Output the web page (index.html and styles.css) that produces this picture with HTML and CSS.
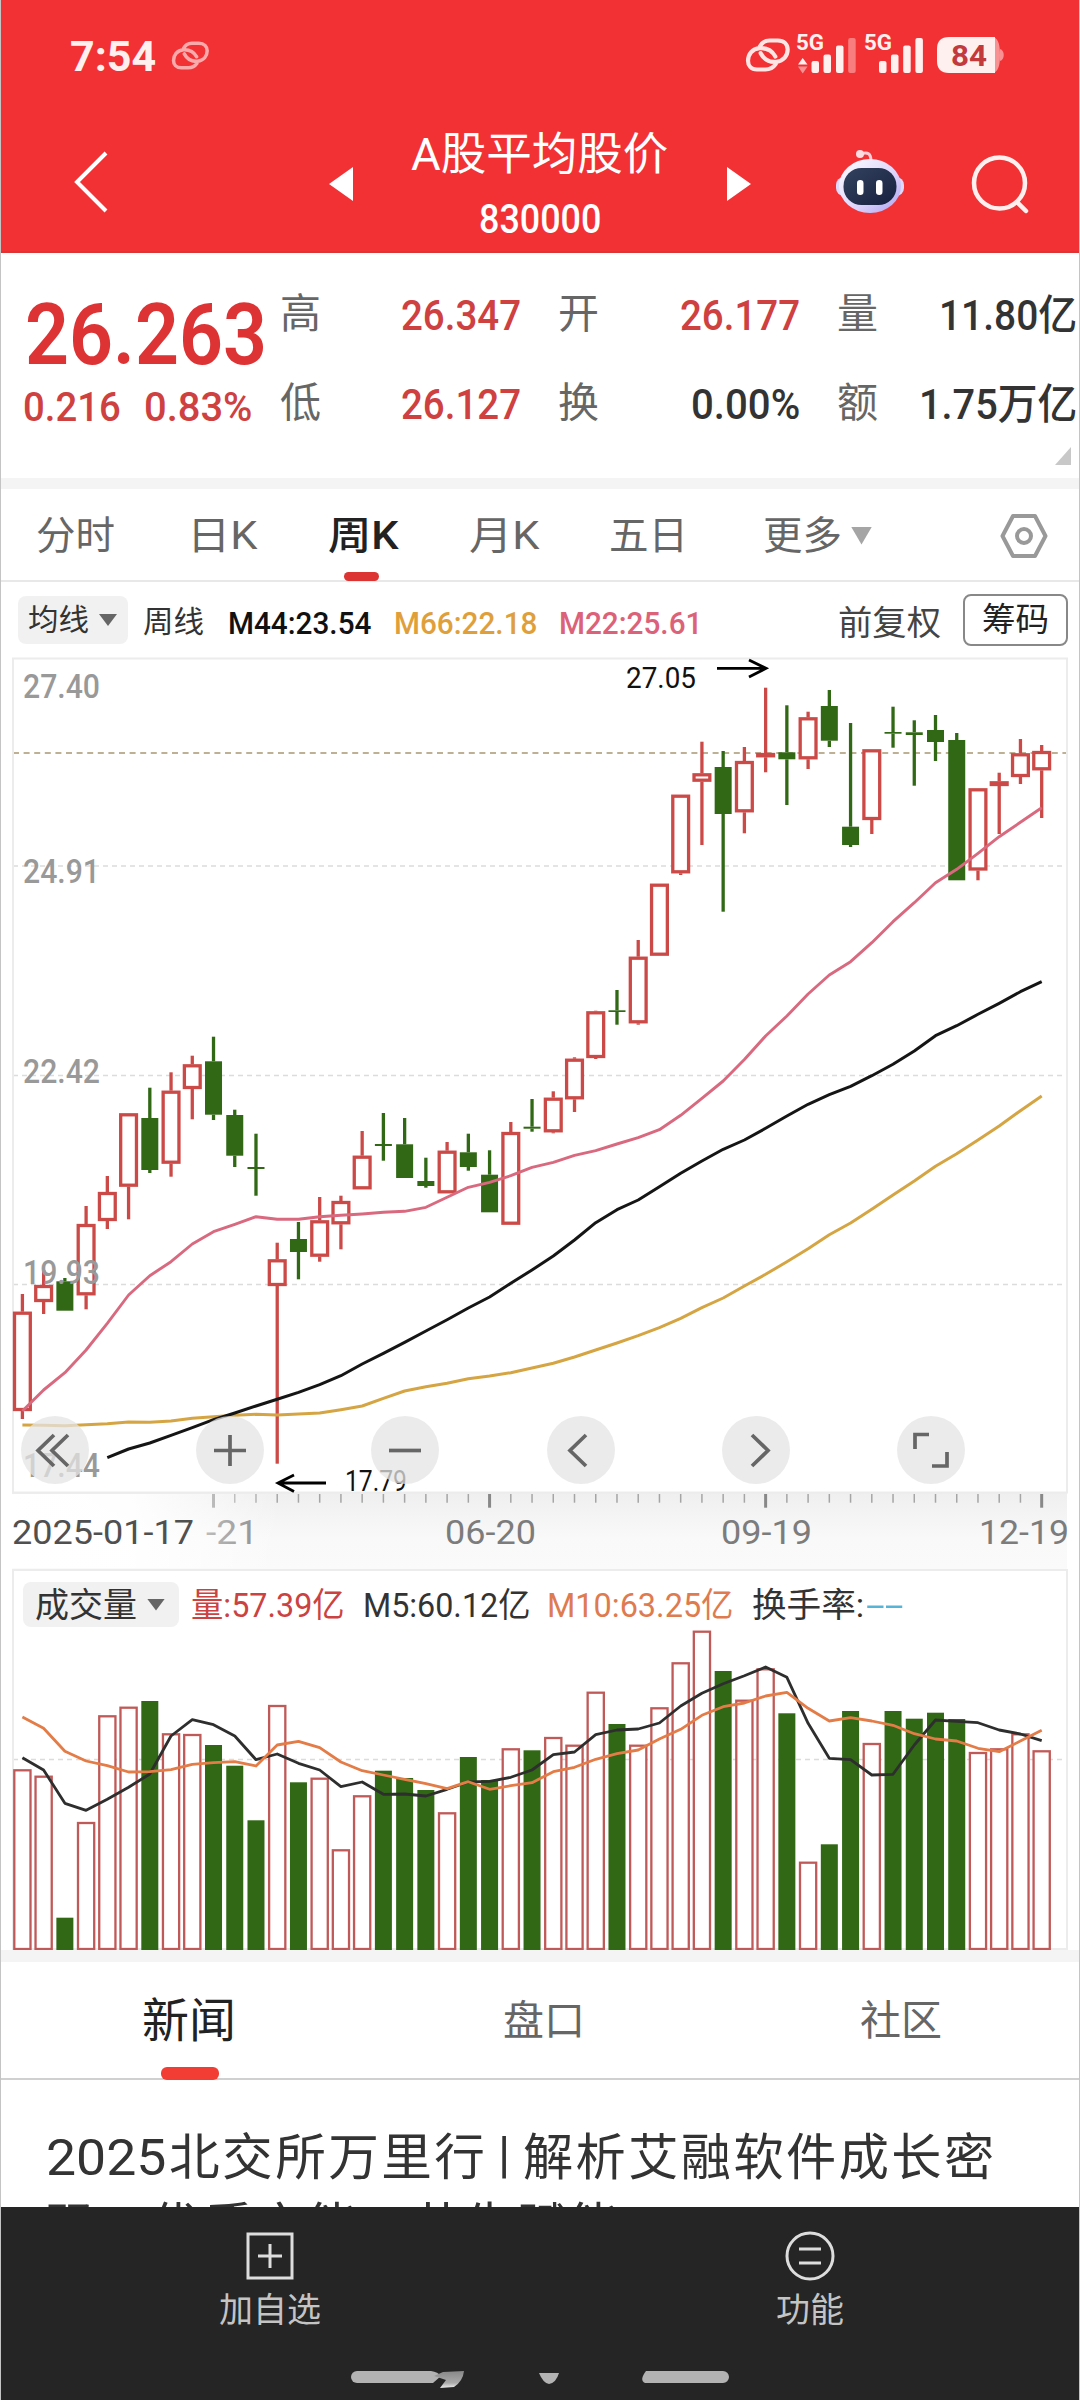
FILE: index.html
```html
<!DOCTYPE html>
<html lang="zh-CN">
<head>
<meta charset="utf-8">
<title>A股平均股价 830000</title>
<link rel="stylesheet" href="styles.css">
</head>
<body>
<div class="screen">
  <header class="top">
    <div class="status">
      <span class="fit time"><span>7:54</span></span>
      <svg class="link small" viewBox="74 53 138 107"><path d="M118 82Q128 63 148 63H172C192 63 202 75 202 90C202 108 190 124 168 127C145 129 130 118 121 101M166 134Q155 150 135 150H110C92 150 83 138 83 124C83 105 95 88 118 86C140 85 155 93 165 111"/></svg>
      <svg class="link" viewBox="74 53 138 107"><path d="M118 82Q128 63 148 63H172C192 63 202 75 202 90C202 108 190 124 168 127C145 129 130 118 121 101M166 134Q155 150 135 150H110C92 150 83 138 83 124C83 105 95 88 118 86C140 85 155 93 165 111"/></svg>
      <svg class="signals" viewBox="795 30 215 46">
        <g fill="#fff0f0">
          <text x="797" y="50" font-size="22" font-weight="700" textLength="28" lengthAdjust="spacingAndGlyphs">5G</text>
          <text x="865" y="50" font-size="22" font-weight="700" textLength="28" lengthAdjust="spacingAndGlyphs">5G</text>
          <path d="M799 64.500L803.700 58L808.500 64.500Z"/>
          <path d="M799 66.500L803.700 73.500L808.500 66.500Z" opacity=".5"/>
          <rect x="812.500" y="61" width="7.500" height="12" rx="2"/>
          <rect x="824.500" y="54.500" width="7.500" height="18.500" rx="2"/>
          <rect x="837" y="45.500" width="7.500" height="27.500" rx="2"/>
          <rect x="849.200" y="38" width="7.500" height="35" rx="2" opacity=".4"/>
          <rect x="880" y="61" width="7.500" height="12" rx="2"/>
          <rect x="892" y="54.500" width="7.500" height="18.500" rx="2"/>
          <rect x="904.200" y="45.500" width="7.500" height="27.500" rx="2"/>
          <rect x="916.400" y="38" width="7.500" height="35" rx="2"/>
          <path d="M995 37C1000 40 1001 46 1001 55C1001 64 1000 70 995 73ZM1001 49C1006 50 1006 60 1001 61Z" opacity=".5"/>
          <path d="M950 37H996V73H950Q938 73 938 61V49Q938 37 950 37Z"/>
        </g>
        <text x="952" y="66" font-size="30" font-weight="700" fill="#c33a3c" textLength="36" lengthAdjust="spacingAndGlyphs">84</text>
      </svg>
    </div>
    <div class="bar">
      <svg class="back" viewBox="0 0 40 66"><path d="M35 4L6 33L35 62"/></svg>
      <svg class="tri prev" viewBox="0 0 24 34"><path d="M0 17L24 0V34Z"/></svg>
      <div class="name">
        <span class="fit title"><span>A股平均股价</span></span>
        <span class="fit code"><span>830000</span></span>
      </div>
      <svg class="tri next" viewBox="0 0 24 34"><path d="M24 17L0 0V34Z"/></svg>
      <svg class="robot" viewBox="0 0 70 66">
        <defs>
          <linearGradient id="shell" x1="0" y1="0" x2="1" y2="1"><stop offset="0" stop-color="#fff"/><stop offset=".6" stop-color="#dcd2fb"/><stop offset="1" stop-color="#a9a2f0"/></linearGradient>
          <linearGradient id="face" x1="0" y1="0" x2="1" y2="1"><stop offset="0" stop-color="#33415f"/><stop offset="1" stop-color="#16213f"/></linearGradient>
        </defs>
        <path d="M26 6Q36 2 36 13" fill="none" stroke="#f9ccd6" stroke-width="3"/>
        <circle cx="25" cy="6" r="4" fill="#fbdce2"/>
        <rect x="1" y="29" width="68" height="19" rx="8" fill="#dcd9fb"/>
        <ellipse cx="35" cy="38" rx="31" ry="27" fill="url(#shell)"/>
        <rect x="8.500" y="20" width="53" height="37" rx="18" fill="url(#face)"/>
        <rect x="22" y="32" width="6.500" height="15" rx="3.200" fill="#fff"/>
        <rect x="41" y="32" width="6.500" height="15" rx="3.200" fill="#fff"/>
      </svg>
      <svg class="search" viewBox="0 0 62 62"><circle cx="29.500" cy="30" r="25.500"/><path d="M47 49L56 58"/></svg>
    </div>
  </header>

  <section class="quote">
    <div class="last">
      <span class="fit price"><span>26.263</span></span>
      <div class="change"><span class="fit delta"><span>0.216</span></span><span class="fit pct"><span>0.83%</span></span></div>
    </div>
    <dl class="stats">
      <dt>高</dt><dd class="fit up"><span>26.347</span></dd>
      <dt>开</dt><dd class="fit up"><span>26.177</span></dd>
      <dt>量</dt><dd class="fit volume"><span>11.80亿</span></dd>
      <dt>低</dt><dd class="fit up"><span>26.127</span></dd>
      <dt>换</dt><dd class="fit rate"><span>0.00%</span></dd>
      <dt>额</dt><dd class="fit amount"><span>1.75万亿</span></dd>
    </dl>
    <i class="corner"></i>
  </section>

  <nav class="periods">
    <a class="fit"><span>分时</span></a>
    <a class="fit k"><span>日K</span></a>
    <a class="fit k on"><span>周K</span></a>
    <a class="fit k"><span>月K</span></a>
    <a class="fit"><span>五日</span></a>
    <a class="fit"><span>更多</span></a>
    <i class="caret"></i>
    <svg class="gear" viewBox="0 0 50 48"><path d="M14 4H36L46.500 24L36 44H14L3.500 24Z"/><circle cx="25" cy="24" r="7"/></svg>
  </nav>

  <div class="averages">
    <button class="pick"><span class="fit w60"><span>均线</span></span><i class="caret"></i></button>
    <span class="fit w60 week"><span>周线</span></span>
    <span class="fit ma m44"><span>M44:23.54</span></span>
    <span class="fit ma m66"><span>M66:22.18</span></span>
    <span class="fit ma m22"><span>M22:25.61</span></span>
    <span class="fit adjust"><span>前复权</span></span>
    <button class="chips"><span class="fit"><span>筹码</span></span></button>
  </div>

  <section class="candles">
    <svg id="kline" viewBox="0 650 1080 919"></svg>
    <div class="controls">
      <button><svg viewBox="0 0 68 68"><path d="M33 19L17 34.500L33 50M47 19L31 34.500L47 50"/></svg></button>
      <button><svg viewBox="0 0 68 68"><path d="M18 34.500H50M34 19V50"/></svg></button>
      <button><svg viewBox="0 0 68 68"><path d="M18 34.500H50"/></svg></button>
      <button><svg viewBox="0 0 68 68"><path d="M39 19L23 34.500L39 50"/></svg></button>
      <button><svg viewBox="0 0 68 68"><path d="M30 19L46 34.500L30 50"/></svg></button>
      <button><svg viewBox="0 0 68 68"><path d="M18 33V18.500H32M35 50H50V36"/></svg></button>
    </div>
  </section>

  <section class="turnover">
    <div class="legend">
      <button class="pick"><span class="fit"><span>成交量</span></span><i class="caret"></i></button>
      <span class="fit vol"><span>量:57.39亿</span></span>
      <span class="fit m5"><span>M5:60.12亿</span></span>
      <span class="fit m10"><span>M10:63.25亿</span></span>
      <span class="fit hand"><span>换手率:</span></span>
      <span class="fit none"><span>--</span></span>
    </div>
    <svg id="volume" viewBox="0 1628 1080 322"></svg>
  </section>

  <nav class="feeds">
    <a class="on"><span class="fit"><span>新闻</span></span></a>
    <a><span class="fit"><span>盘口</span></span></a>
    <a><span class="fit"><span>社区</span></span></a>
  </nav>
  <article class="news">
    <h3 class="first"><span class="fit year"><span>2025</span></span><span class="fit lead"><span>北交所万里行</span></span><span class="bar-mark">|</span><span class="fit rest"><span>解析艾融软件成长密</span></span></h3>
    <span class="second">码，优质产能、共生赋能</span>
  </article>

  <footer class="dock">
    <div class="actions">
      <a><svg viewBox="0 0 52 52"><rect x="4" y="4" width="44" height="44"/><path d="M14 26H38M26 14V38"/></svg><span>加自选</span></a>
      <a><svg viewBox="0 0 52 52"><circle cx="26" cy="26" r="23"/><path d="M15 19H37M15 33H37"/></svg><span>功能</span></a>
    </div>
    <svg class="home" viewBox="340 2360 400 40">
      <defs><linearGradient id="worn" x1="0" y1="0" x2="0" y2="1"><stop offset="0" stop-color="#888"/><stop offset=".7" stop-color="#aaa"/><stop offset="1" stop-color="#eee"/></linearGradient></defs>
      <path d="M357 2371H431Q438 2372 441 2376L433 2383H357A6 6 0 0 1 357 2371Z"/>
      <path d="M646 2371H723A6 6 0 0 1 723 2383H645Q639 2380 646 2371Z"/>
      <path d="M443 2372L464 2371Q463 2381 454 2387L440 2388L446 2380L434 2376Z" fill="url(#worn)"/>
      <path d="M539 2373H559Q556 2383 549 2384Q543 2383 539 2373Z"/>
    </svg>
  </footer>
</div>
<script src="script.js"></script>
</body>
</html>
```
FILE: styles.css
```css
* { box-sizing: border-box; margin: 0; padding: 0; }
body { width: 1080px; background: #fff; font-family: Roboto, "Noto Sans CJK SC", sans-serif; color: #333; }
button { border: 0; background: none; font: inherit; color: inherit; }
svg { display: block; flex: none; }
i { display: block; flex: none; }
.screen { width: 1080px; height: 2400px; overflow: hidden; display: flex; flex-direction: column; border: solid #c4c4c4; border-width: 0 1px; }
.screen > * { flex: none; margin-left: -1px; width: 1080px; }
.fit { display: block; flex: none; white-space: nowrap; }
.fit > span { display: inline-block; transform-origin: 0 50%; }

/* header */
.top { height: 253px; background: #f23135; border-bottom: 2px solid #dc3536; color: #fff; }
.status { height: 113px; display: flex; align-items: center; }
.time { width: 86px; margin-left: 70px; font-size: 43px; font-weight: 700; line-height: 113px; color: #fff0f0; }
.link { width: 46px; height: 36px; margin: 0 3px 3px 0; fill: none; stroke: #ffe4e4; stroke-width: 12.5; stroke-linecap: round; }
.link.small { width: 39px; height: 31px; margin: 0 0 3px 15px; opacity: .68; }
.link.small + .link { margin-left: 535px; }
.signals { width: 215px; height: 46px; margin-top: -7px; }
.bar { display: flex; align-items: flex-start; height: 138px; }
.back { width: 40px; height: 66px; margin: 36px 0 0 71px; fill: none; stroke: #fff; stroke-width: 4; }
.tri { width: 24px; height: 34px; margin-top: 54px; fill: #fff; }
.prev { margin-left: 218px; }
.name { width: 255px; margin: 14px 0 0 59px; display: flex; flex-direction: column; align-items: center; }
.title { width: 257px; font-size: 45px; line-height: 56px; }
.code { width: 122px; font-size: 40px; font-weight: 500; line-height: 46px; margin-top: 14px; }
.next { margin-left: 60px; }
.robot { width: 70px; height: 66px; margin: 35px 0 0 84px; }
.search { width: 62px; height: 62px; margin: 40px 0 0 65px; fill: none; stroke: #fff0f0; stroke-width: 4.5; stroke-linecap: round; }

/* quote */
.quote { height: 236px; display: flex; border-bottom: 11px solid #f4f4f4; position: relative; }
.last { width: 280px; padding: 32px 0 0 25px; color: #de3335; flex: none; }
.price { width: 242px; font-size: 86px; font-weight: 600; line-height: 100px; }
.change { display: flex; gap: 23px; margin-top: 1px; margin-left: -2px; color: #cf4040; }
.change .fit { font-size: 41px; font-weight: 500; line-height: 42px; }
.delta { width: 98px; }
.pct { width: 109px; }
.stats { display: grid; grid-template-columns: 42px 202px 77px 202px 77px 202px; grid-auto-rows: 89px; padding-top: 18px; }
.stats dt { font-size: 41px; line-height: 89px; color: #666; margin-top: -1px; }
.stats dd { justify-self: end; font-size: 42px; line-height: 90px; font-weight: 500; color: #333; margin-right: 3px; }
.stats dt:nth-of-type(3n+2), .stats dt:nth-of-type(3n) { padding-left: 34px; }
.stats .up { width: 120px; color: #cf4040; }
.stats .rate { width: 109px; }
.stats .volume { width: 138px; margin-right: 5px; }
.stats .amount { width: 158px; margin-right: 5px; }
.corner { position: absolute; right: 9px; bottom: 13px; width: 16px; height: 18px; background: #c8c8c8; clip-path: polygon(100% 0, 100% 100%, 0 100%); }

/* period tabs */
.periods { height: 93px; display: flex; align-items: center; border-bottom: 2px solid #e8e8e8; color: #666; font-size: 39px; line-height: 91px; }
.periods .fit { width: 79px; margin-left: 36px; padding-top: 3px; }
.periods .fit.k { width: 70px; margin-left: 72px; }
.periods .fit.k.on { width: 71px; margin-left: 71px; }
.periods .fit.k.on + .k { margin-left: 70px; }
.periods .k + .fit:not(.k) { margin-left: 70px; }
.periods .fit + .fit:nth-child(6) { margin-left: 75px; }
.periods .on { color: #222; font-weight: 500; position: relative; }
.on::after { content: ""; position: absolute; background: #dc3433; }
.periods .on::after { left: 16px; bottom: 1px; width: 35px; height: 9px; border-radius: 5px; }
.caret { width: 18px; height: 12px; background: #666; clip-path: polygon(0 0, 100% 0, 50% 100%); }
.periods .caret { width: 21px; height: 18px; background: #a5a5a5; margin: 2px 0 0 9px; }
.gear { width: 50px; height: 48px; margin-left: 127px; margin-top: 2px; fill: none; stroke: #999; stroke-width: 4; stroke-linejoin: round; }

/* moving average row */
.averages { height: 68px; display: flex; align-items: center; padding: 8px 0 0 18px; font-size: 32px; line-height: 46px; }
.pick { display: flex; align-items: center; background: #f1f1f1; border-radius: 8px; color: #333; font-size: 30px; }
.averages .pick { width: 110px; height: 48px; padding-left: 9px; gap: 11px; }
.w60 { width: 61px; font-size: 30px; }
.week { margin: 4px 0 0 15px; }
.ma { width: 143px; font-weight: 500; margin-top: 5px; }
.m44 { margin-left: 24px; color: #111; }
.m66 { margin-left: 23px; color: #dfa03c; }
.m22 { margin-left: 22px; color: #dc6279; }
.adjust { width: 103px; font-size: 34px; margin: 6px 0 0 136px; color: #444; }
.chips { width: 105px; height: 52px; margin-left: 22px; border: 2px solid #888; border-radius: 8px; font-size: 33px; padding-left: 17px; text-align: left; }
.chips .fit { width: 67px; line-height: 46px; color: #222; }

/* charts */
.candles { position: relative; height: 919px; }
.candles svg, .turnover svg { width: 100%; }
.controls { position: absolute; left: 21px; top: 766px; display: flex; gap: 107.200px; }
.controls button { width: 68px; height: 68px; border-radius: 50%; background: rgba(228, 228, 228, .75); }
.controls svg { fill: none; stroke: #666; stroke-width: 3.700; }
.turnover { height: 393px; border-bottom: 12px solid #f4f4f4; }
.legend { height: 59px; margin: 0 12px; border: 2px solid #ececec; border-bottom: 0; display: flex; align-items: center; font-size: 34px; line-height: 44px; }
.legend .pick { width: 156px; height: 45px; margin: 10px 0 0 9px; padding-left: 12px; gap: 10px; font-size: 34px; }
.legend .pick .fit { width: 102px; }
.legend > .fit { margin-top: 10px; }
.vol { width: 154px; margin-left: 12px; color: #cb4242; }
.m5 { width: 167px; margin-left: 18px; }
.m10 { width: 187px; margin-left: 17px; color: #de7b4f; }
.hand { width: 112px; margin-left: 18px; }
.none { width: 38px; margin-left: 2px; color: #58b4d6; }
svg text { font-family: Roboto, "Noto Sans CJK SC", sans-serif; }

/* news */
.feeds { height: 118px; border-bottom: 2px solid #d0d0d0; display: grid; grid-template-columns: 378px 332px 382px; font-size: 41px; color: #666; line-height: 118px; }
.feeds a { position: relative; display: flex; justify-content: center; }
.feeds .fit { width: 82px; }
.feeds .on { color: #222; font-size: 47px; }
.feeds .on .fit { width: 94px; }
.feeds .on::after { left: 161px; bottom: 0; width: 58px; height: 13px; border-radius: 6px; background: #f13d33; }
.news { height: 127px; overflow: hidden; padding: 44px 0 0 46px; font-size: 50px; line-height: 68px; color: #333; }
.news .first { display: flex; font-size: 50px; font-weight: 400; }
.year { width: 120px; }
.lead { width: 318px; letter-spacing: 2.400px; margin-left: 3px; }
.bar-mark { width: 34px; text-align: center; margin-top: -3px; }
.rest { width: 474px; letter-spacing: 2.400px; margin-left: 2px; }
.news .second { display: block; letter-spacing: 2.300px; line-height: 70px; }

/* dock */
.dock { height: 193px; background: #252525; display: flex; flex-direction: column; align-items: center; color: #c4c4c4; }
.actions { width: 1080px; height: 153px; display: grid; grid-template-columns: 1fr 1fr; font-size: 34px; line-height: 50px; }
.actions a { display: flex; flex-direction: column; align-items: center; padding-top: 23px; }
.actions svg { width: 52px; height: 52px; fill: none; stroke: #ddd; stroke-width: 3; margin-bottom: 3px; }
.home { width: 400px; height: 40px; fill: #b3b3b3; }
```
FILE: script.js
```js
// Squeeze or stretch a label to the width its box has in the stylesheet.
document.querySelectorAll('.fit').forEach(function (box) {
  var label = box.firstElementChild;
  label.style.transform = 'scaleX(' + box.clientWidth / label.offsetWidth + ')';
});

var STEP = 21.235, FIRST = 22.4;
var RED = '#cb4a47', GREEN = '#306815';
function x(i) { return FIRST + i * STEP; }
function rect(l, t, w, h, attrs) {
  return '<rect x="' + l + '" y="' + t + '" width="' + w + '" height="' + h + '" ' + attrs + '/>';
}
function seg(x1, y1, x2, y2, attrs) {
  return '<path d="M' + x1 + ' ' + y1 + 'L' + x2 + ' ' + y2 + '" ' + attrs + '/>';
}
function curve(ys, from, color, w) {
  var pts = ys.map(function (y, i) { return x(i + from).toFixed(1) + ',' + y; }).join(' ');
  return '<polyline points="' + pts + '" fill="none" stroke="' + color + '" stroke-width="' + w + '" stroke-linejoin="round"/>';
}
function text(str, l, base, w, size, attrs) {
  return '<text x="' + l + '" y="' + base + '" font-size="' + size + '" textLength="' + w + '" lengthAdjust="spacingAndGlyphs" ' + attrs + '>' + str + '</text>';
}

// direction, high, body top, body bottom, low
var weeks = [
  ['r',1294,1311.7,1411,1419],['r',1270,1285,1302,1314],['g',1278,1281.3,1310.7,1310.7],['r',1206,1224,1295.3,1309.3],
  ['r',1176,1192,1221,1229],['r',1113.3,1113.3,1186.7,1219.3],['g',1087.7,1118,1170,1173],['r',1072.3,1090.7,1163.7,1176.7],
  ['r',1055.7,1064.3,1089,1119.3],['g',1036.7,1061.3,1114.7,1120],['g',1109.7,1115,1155.7,1167],['g',1133.7,1167,1169,1195.7],
  ['r',1242.7,1259.3,1286,1463.7],['g',1222,1239,1252,1279.3],['r',1197,1220.3,1256.7,1261.7],['r',1195.7,1201,1224.3,1249.3],
  ['r',1131,1155.7,1189.3,1189.3],['g',1113,1144,1146,1160.7],['g',1118,1144.3,1178,1178],['g',1157.7,1181,1186,1187.7],
  ['r',1142,1150.7,1193.3,1193.3],['g',1133.7,1152.3,1167,1170.7],['g',1150.3,1174.7,1212.3,1212.3],['r',1122,1132,1224.7,1224.7],
  ['g',1099,1126.7,1128.7,1131.7],['r',1091.3,1097.7,1132.3,1133.3],['r',1057.3,1058.7,1099.3,1112],['r',1010.7,1011.3,1058,1059],
  ['g',990,1010.3,1012,1024.7],['r',940,956.7,1023.3,1024.7],['r',883.7,883.7,955.7,955.7],['r',794.7,794.7,873.3,875],
  ['r',741.7,773.3,781.7,845],['g',751,767,814,911.7],['r',747,761,812.3,833.3],['r',687.7,753,757.3,772.3],
  ['g',705.3,752.3,759.3,805],['r',711.7,717.3,759.3,769],['g',690,706,740.7,747],['g',723,826.7,845,847],
  ['r',749.3,749.3,820,834],['g',706.7,732,733.7,747.7],['g',720.3,732.3,735,785.7],['g',715,730,742,761],
  ['g',733,740,880.3,880.3],['r',788.3,788.3,870.5,880.3],['r',772.7,781.3,786,834],['r',739,753.3,777,784],['r',745,751,770.3,818]
];
var ma22 = [1411,1390,1372.7,1350,1323.3,1295,1275.7,1261.7,1244,1231.7,1224.3,1216.7,1219.3,1219.3,1216.7,1215.3,1214,1212.3,1211.3,1207.3,1197.3,1187.3,1182.3,1175.7,1167.3,1162.3,1155.3,1150.7,1144,1137.7,1129.7,1115.3,1098.3,1081,1059.5,1036,1016,994,975,961.7,942.7,921.7,902.7,882.7,869.3,853.3,836.7,822.3,807.7];
var ma44 = [1457.7,1449,1443,1435.3,1427.7,1419.7,1413,1406,1399.3,1392.3,1384.7,1375.7,1364,1353.3,1342.3,1331,1319.7,1308,1297,1283.3,1270,1256,1240,1222.7,1209.7,1200,1186.7,1173.3,1161,1149.3,1140,1128.3,1116,1104.3,1094.7,1086.3,1075.7,1064.3,1051,1035.7,1025.7,1014.3,1003.3,991.7,981.7];
var ma66 = [1425,1425.3,1425.7,1424.7,1423.7,1422,1422.3,1421,1418.3,1416.7,1415.3,1414.3,1415,1414,1413,1409.7,1406,1398.3,1391,1386.7,1383.3,1378.7,1376,1372.7,1368,1363.3,1357,1350,1343,1335.7,1327.7,1318.3,1307.7,1298,1286,1274.3,1261.7,1248.7,1234.7,1223,1209.3,1195,1181,1166.3,1153.7,1140,1126,1110.7,1096];

var out = '<defs><linearGradient id="axis" x1="0" y1="0" x2="0" y2="1"><stop offset="0" stop-color="#efefef"/><stop offset=".6" stop-color="#f9f9f9"/><stop offset="1" stop-color="#fafafa"/></linearGradient>' +
  '<linearGradient id="fade" x1="0" y1="0" x2="1" y2="0"><stop offset="0" stop-color="#fff"/><stop offset=".45" stop-color="#fff" stop-opacity=".95"/><stop offset="1" stop-color="#fff" stop-opacity="0"/></linearGradient></defs>';
out += rect(12, 1493, 1055, 76, 'fill="url(#axis)"');
[866, 1075.5, 1284.5].forEach(function (y) {
  out += seg(13, y, 1066, y, 'stroke="#dcdcdc" stroke-width="1.5" stroke-dasharray="5 4"');
});
out += seg(13, 753, 1067, 753, 'stroke="#a89672" stroke-width="1.6" stroke-dasharray="6 4.6"');
out += rect(13, 658.5, 1054, 834, 'fill="none" stroke="#ececec" stroke-width="2"');
weeks.forEach(function (k, i) {
  var c = k[0] === 'r' ? RED : GREEN, cx = x(i);
  out += seg(cx, k[1], cx, k[2], 'stroke="' + c + '" stroke-width="3.3"') + seg(cx, k[3], cx, k[4], 'stroke="' + c + '" stroke-width="3.3"');
  if (k[0] === 'g') out += rect(cx - 8.5, k[2], 17, k[3] - k[2], 'fill="' + c + '"');
  else out += rect(cx - 7.9, k[2] + 1.5, 15.8, Math.max(1, k[3] - k[2] - 3), 'fill="#fff" stroke="' + c + '" stroke-width="3.3"');
});
[['27.40', 698], ['24.91', 883], ['22.42', 1083], ['19.93', 1284], ['17.44', 1477]].forEach(function (t) {
  out += text(t[0], 23, t[1], 77, 34, 'fill="#999" font-weight="500"');
});
out += curve(ma66, 0, '#d5a544', 3) + curve(ma44, 4, '#151515', 3) + curve(ma22, 0, '#d8697f', 2.9);
out += text('27.05', 626, 688, 70, 30, 'fill="#111"') + text('17.79', 345, 1491, 62, 30, 'fill="#111"');
out += '<path d="M717 668.300H765M749 660L766 668.300L749 677M326 1483H279M294 1475L278 1483L294 1491.500" fill="none" stroke="#000" stroke-width="2.800"/>';
for (var i = 9; i < 49; i++) {
  var major = i === 9 || i === 22 || i === 35 || i === 48;
  out += seg(x(i), 1494, x(i), major ? 1507.7 : 1502.7, 'stroke="' + (major ? '#888' : '#a5a5a5') + '" stroke-width="' + (major ? 3 : 1.5) + '"');
}
out += text('-21', 206, 1543.5, 52, 33, 'fill="#808080"');
out += rect(2, 1494, 280, 74, 'fill="url(#fade)"');
out += text('2025-01-17', 12, 1543.5, 182, 33, 'fill="#505050"');
out += text('06-20', 445, 1543.5, 91, 33, 'fill="#7c7c7c"') +
  text('09-19', 721, 1543.5, 91, 33, 'fill="#7c7c7c"') +
  text('12-19', 979, 1543.5, 90, 33, 'fill="#7c7c7c"');
document.getElementById('kline').innerHTML = out;

// Volume panel, in thirds of a pixel below y = 1560
var bars = [628,647,1073,786,466,440,423,520,522,555,617,781,435,667,653,868,706,632,654,690,757,591,660,565,571,531,554,395,492,554,442,307,212,333,419,325,460,905,853,453,549,453,476,458,477,576,565,520,571];
var m5 = [593,630,730,751,718,682,642,528,479,494,528,599,582,610,630,680,666,703,702,708,688,666,664,652,630,584,576,524,510,507,489,438,400,371,347,321,352,490,595,599,645,643,555,480,484,488,510,522,542];
var m10 = [471,505,574,603,617,636,635,629,613,608,605,618,555,544,563,606,632,645,658,671,686,665,688,677,668,635,622,598,581,570,537,508,466,440,429,408,397,445,483,473,483,496,521,537,543,565,575,543,511];
function vy(v) { return +(1560 + v / 3).toFixed(1); }
var vol = seg(13, 1759.5, 1066, 1759.5, 'stroke="#dcdcdc" stroke-width="1.5" stroke-dasharray="5 4"');
vol += '<path d="M13 1628V1949H1067V1628" fill="none" stroke="#ececec" stroke-width="2"/>';
bars.forEach(function (v, i) {
  var top = vy(v), cx = x(i);
  if (weeks[i][0] === 'g') vol += rect(cx - 8.5, top, 17, 1950 - top, 'fill="' + GREEN + '"');
  else vol += rect(cx - 8.1, top + 1, 16.2, 1948 - top, 'fill="#fff" stroke="#c05a58" stroke-width="2.3"');
});
vol += curve(m5.map(vy), 0, '#2e2e2e', 2.8) + curve(m10.map(vy), 0, '#e37c47', 2.8);
document.getElementById('volume').innerHTML = vol;
```
